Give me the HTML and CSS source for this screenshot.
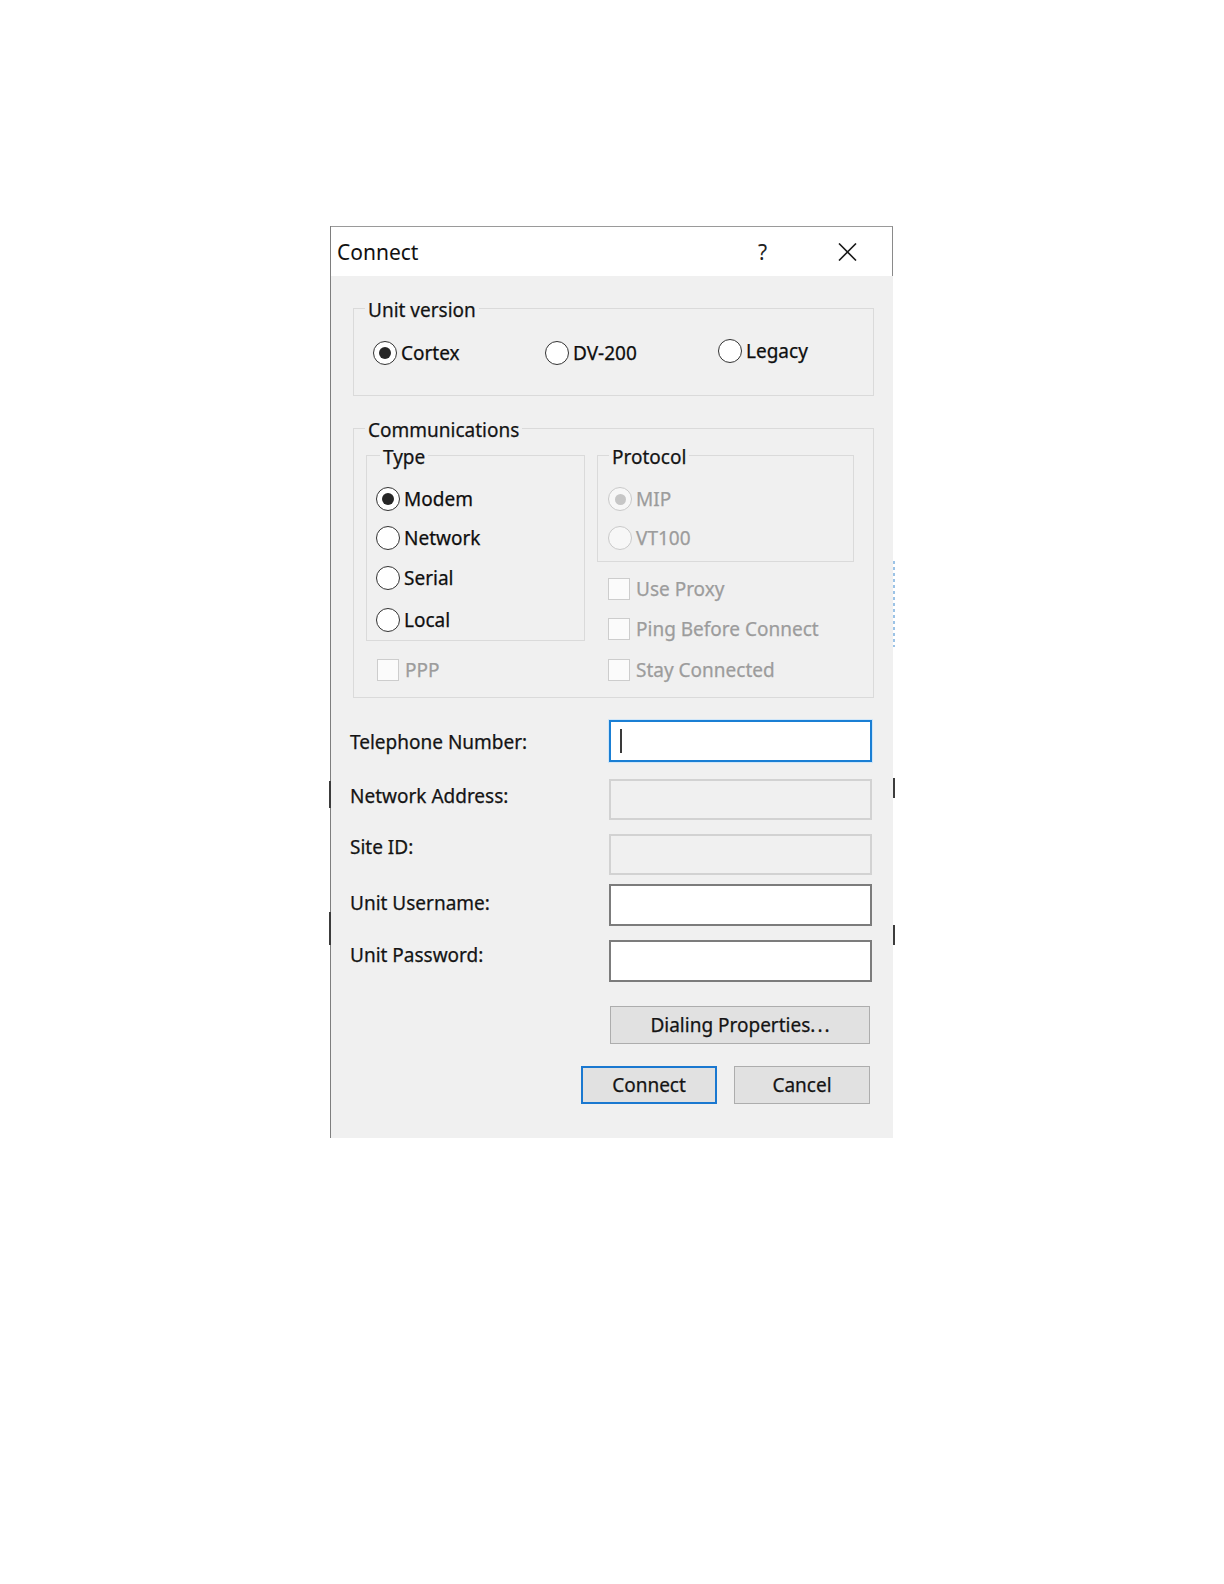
FILE: index.html
```html
<!DOCTYPE html>
<html lang="en">
<head>
<meta charset="utf-8">
<title>Connect</title>
<link rel="stylesheet" href="styles.css">
</head>
<body>
<div class="dialog">
  <div class="titlebar">
    <span class="title">Connect</span>
    <span class="help">?</span>
    <svg class="close" width="19" height="18" viewBox="0 0 19 18" aria-hidden="true">
      <path d="M1 0.5 L18 17.5 M18 0.5 L1 17.5" stroke="#1a1a1a" stroke-width="1.6" fill="none"/>
    </svg>
  </div>
  <div class="body">
    <div class="group unit">
      <div class="legend">Unit version</div>
      <div class="unit-row">
        <div class="opt"><span class="radio on"></span>Cortex</div>
        <div class="opt"><span class="radio"></span>DV-200</div>
        <div class="opt legacy"><span class="radio"></span>Legacy</div>
      </div>
    </div>

    <div class="group comm">
      <div class="legend">Communications</div>
      <div class="comm-cols">
        <div class="col col-left">
          <div class="group type">
            <div class="legend">Type</div>
            <div class="opts">
              <div class="opt"><span class="radio on"></span>Modem</div>
              <div class="opt t-network"><span class="radio"></span>Network</div>
              <div class="opt t-serial"><span class="radio"></span>Serial</div>
              <div class="opt t-local"><span class="radio"></span>Local</div>
            </div>
          </div>
          <div class="opt check disabled ppp"><span class="box"></span>PPP</div>
        </div>
        <div class="col col-right">
          <div class="group proto">
            <div class="legend">Protocol</div>
            <div class="opts proto-opts">
              <div class="opt disabled"><span class="radio on"></span>MIP</div>
              <div class="opt disabled"><span class="radio"></span>VT100</div>
            </div>
          </div>
          <div class="checks">
            <div class="opt check disabled"><span class="box"></span>Use Proxy</div>
            <div class="opt check disabled"><span class="box"></span>Ping Before Connect</div>
            <div class="opt check disabled c-stay"><span class="box"></span>Stay Connected</div>
          </div>
        </div>
      </div>
    </div>

    <div class="fields">
      <div class="labels">
        <div class="lbl l-tel">Telephone Number:</div>
        <div class="lbl l-net">Network Address:</div>
        <div class="lbl l-site">Site ID:</div>
        <div class="lbl l-user">Unit Username:</div>
        <div class="lbl l-pass">Unit Password:</div>
      </div>
      <div class="inputs">
        <div class="input focus i-tel"><span class="caret"></span></div>
        <div class="input off i-net"></div>
        <div class="input off i-site"></div>
        <div class="input i-user"></div>
        <div class="input i-pass"></div>
      </div>
    </div>

    <div class="btn-row dial-row">
      <div class="btn dialing">Dialing Properties<span class="dots">...</span></div>
    </div>
    <div class="btn-row action-row">
      <div class="btn default">Connect</div>
      <div class="btn cancel">Cancel</div>
    </div>
  </div>

  <span class="edge edge-l1"></span>
  <span class="edge edge-l2"></span>
  <span class="edge edge-r1"></span>
  <span class="edge edge-r2"></span>
  <span class="edge edge-r3"></span>
</div>
</body>
</html>
```

FILE: styles.css
```css
* {
  box-sizing: border-box;
}

html, body {
  margin: 0;
  padding: 0;
  background: #ffffff;
}

body {
  font-family: "Noto Sans", "Open Sans", sans-serif;
  font-size: 19px;
  color: #0e0e0e;
}

.dialog {
  position: relative;
  margin: 226px 0 0 330px;
  width: 563px;
  border-left: 1px solid #7e7e7e;
}

/* title bar */
.titlebar {
  height: 50px;
  background: #ffffff;
  border-top: 1px solid #9a9a9a;
  border-right: 1px solid #8a8a8a;
  display: flex;
  align-items: center;
  padding-left: 6px;
}

.title {
  font-size: 21px;
  color: #111;
  flex: 1;
}

.help {
  font-size: 21px;
  color: #222;
  margin-right: 71px;
}

.close {
  display: block;
  margin-right: 35px;
}

/* body */
.body {
  background: #f0f0f0;
  width: 562px;
  padding: 32px 19px 34px 22px;
  -webkit-text-stroke: 0.25px currentColor;
}

.group {
  border: 1px solid #dadada;
}

.legend {
  display: block;
  width: fit-content;
  margin: -10px 0 0 11px;
  padding: 0 3px;
  line-height: 22px;
  background: #f0f0f0;
  color: #141414;
}

.opt {
  display: flex;
  align-items: center;
  height: 24px;
  line-height: 24px;
  white-space: nowrap;
}

.radio {
  flex: none;
  width: 24px;
  height: 24px;
  border-radius: 50%;
  border: 1.6px solid #333333;
  background: #ffffff;
  margin-right: 4px;
  display: flex;
  align-items: center;
  justify-content: center;
}

.radio.on::after {
  content: "";
  width: 12px;
  height: 12px;
  border-radius: 50%;
  background: #262626;
}

.box {
  flex: none;
  width: 22px;
  height: 22px;
  border: 1.5px solid #cdcdcd;
  background: #fbfbfb;
  margin-right: 6px;
}

.disabled {
  color: #9c9c9c;
}

.disabled .radio {
  border-color: #c9c9c9;
  background: #f7f7f7;
}

.disabled .radio.on::after {
  width: 11px;
  height: 11px;
  background: #c6c6c6;
}

/* unit version */
.unit-row {
  display: grid;
  grid-template-columns: 172px 173px 1fr;
  margin-top: 20px;
  padding: 0 0 30px 19px;
}

.legacy {
  margin-top: -2px;
}

/* communications */
.comm {
  margin-top: 32px;
  padding: 0 18px 15px 12px;
}

.comm > .legend {
  margin-left: -1px;
}

.comm-cols {
  display: grid;
  grid-template-columns: 219px 257px;
  column-gap: 12px;
  margin-top: 14px;
}

.opts {
  display: flex;
  flex-direction: column;
  margin-top: 19px;
}

.t-network {
  margin-top: 15px;
}

.t-serial {
  margin-top: 16px;
}

.t-local {
  margin-top: 18px;
}

.type {
  padding: 0 0 8px 9px;
}

.type > .legend {
  margin-left: 4px;
}

.proto {
  padding: 0 0 11px 10px;
}

.proto-opts {
  gap: 15px;
}

.proto > .legend {
  margin-left: 1px;
}

.ppp {
  margin: 17px 0 0 11px;
}

.checks {
  display: flex;
  flex-direction: column;
  gap: 16px;
  margin: 15px 0 0 11px;
}

.c-stay {
  margin-top: 1px;
}

/* fields */
.fields {
  display: flex;
  justify-content: space-between;
  margin: 22px 2px 0 0;
}

.labels {
  display: flex;
  flex-direction: column;
  margin-left: -3px;
}

.lbl {
  height: 24px;
  line-height: 24px;
  color: #141414;
}

.l-tel { margin-top: 10px; }
.l-net { margin-top: 30px; }
.l-site { margin-top: 27px; }
.l-user { margin-top: 32px; }
.l-pass { margin-top: 28px; }

.inputs {
  display: flex;
  flex-direction: column;
  width: 263px;
}

.input {
  height: 42px;
  background: #ffffff;
  border: 2px solid #7c7c7c;
  display: flex;
  align-items: center;
  padding-left: 9px;
}

.i-net { margin-top: 17px; height: 41px; }
.i-site { margin-top: 14px; height: 41px; }
.i-user { margin-top: 9px; }
.i-pass { margin-top: 14px; }

.input.off {
  background: #f0f0f0;
  border-color: #d2d2d2;
}

.input.focus {
  border-color: #1a7fd4;
  box-shadow: 0 0 0 1px #cfe6f9;
}

.caret {
  width: 2px;
  height: 24px;
  background: #3a3a3a;
}

/* buttons */
.btn-row {
  display: flex;
  justify-content: flex-end;
  margin-right: 4px;
}

.dial-row {
  margin-top: 24px;
}

.action-row {
  margin-top: 22px;
  gap: 17px;
}

.btn {
  height: 38px;
  background: #e1e1e1;
  border: 1.5px solid #adadad;
  display: flex;
  align-items: center;
  justify-content: center;
  color: #141414;
}

.dots {
  letter-spacing: 2px;
  margin-right: -2px;
}

.dialing {
  width: 260px;
}

.default {
  width: 136px;
  border: 2.5px solid #1a78d0;
}

.cancel {
  width: 136px;
}

/* stray edge marks of the captured window */
.edge {
  position: absolute;
  width: 2px;
}

.edge-l1 { left: -2px; top: 555px; height: 27px; background: #3c3c3c; }
.edge-l2 { left: -2px; top: 686px; height: 33px; background: #3c3c3c; }
.edge-r1 { right: -2px; top: 335px; height: 86px; background: repeating-linear-gradient(#9cc3e6 0 3px, transparent 3px 6px); }
.edge-r2 { right: -2px; top: 552px; height: 20px; background: #3c3c3c; }
.edge-r3 { right: -2px; top: 699px; height: 20px; background: #3c3c3c; }
```
